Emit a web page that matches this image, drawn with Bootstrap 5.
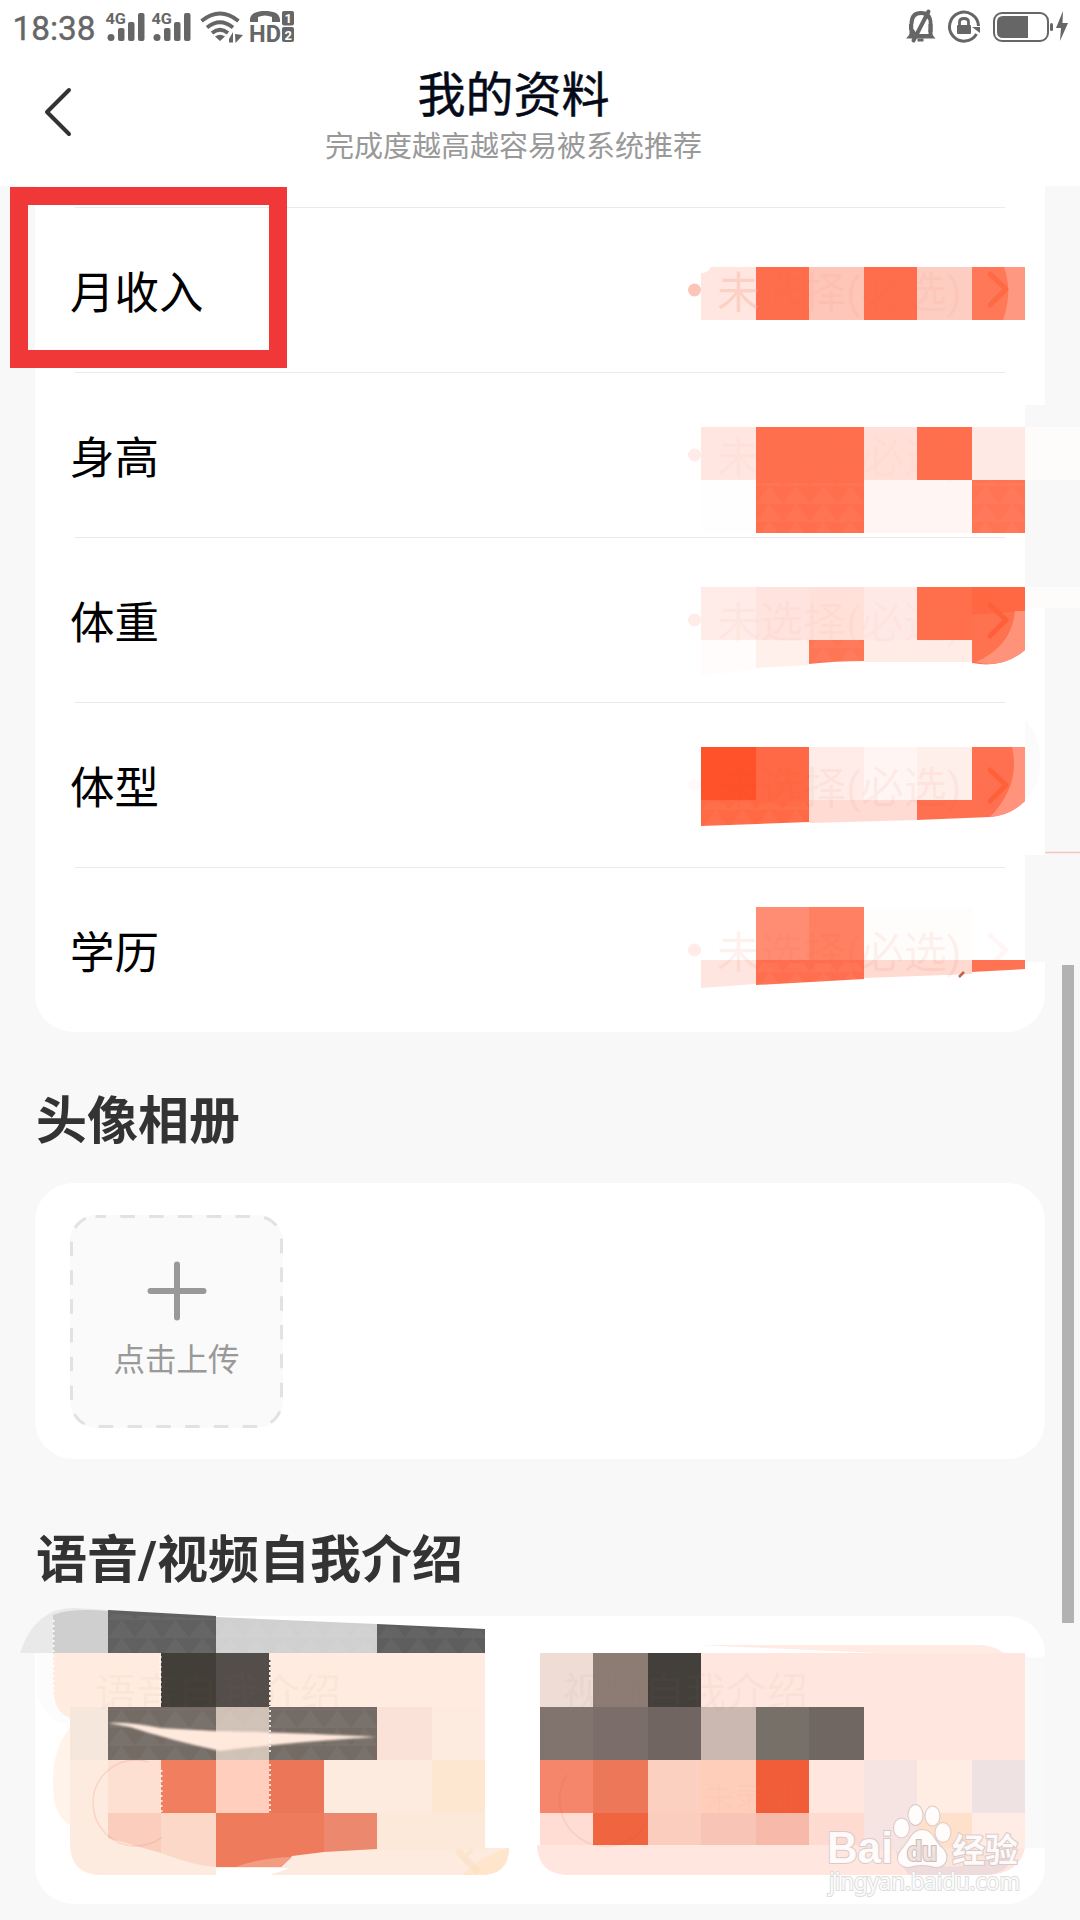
<!DOCTYPE html>
<html lang="zh-CN">
<head>
<meta charset="utf-8">
<meta name="viewport" content="width=device-width, initial-scale=1">
<title>我的资料</title>
<link href="https://cdn.jsdelivr.net/npm/bootstrap@5.3.0/dist/css/bootstrap.min.css" rel="stylesheet">
<style>
  body{font-family:Roboto,"Noto Sans CJK SC",sans-serif;background:#f8f8f8;color:#000}
  svg{display:block;overflow:visible}
  svg text{font-family:Roboto,"Noto Sans CJK SC",sans-serif}
  .screen{width:1080px;height:1920px}
  .topbar{height:186px}
  .status{height:56px}
  .navrow{height:130px;padding:0 125px 0 44px}
  .navtitle{font-size:48px;line-height:56px;font-weight:400;color:#050a18;padding-top:12px;-webkit-text-stroke:.5px #050a18}
  .navsub{font-size:29px;line-height:40px;color:#999;padding-top:3px}
  .backicon{padding-top:31px}
  .panel{margin:0 35px;background:#fff;border-radius:38px}
  .fields{height:846px;border-radius:0 0 38px 38px;padding:21px 0 0 36px}
  .field{height:165px;font-size:44.5px}
  .field>span{padding-top:9px;margin-left:-1px}
  .rule{position:relative}
  .rule::before{content:"";position:absolute;left:4px;right:40px;top:0;height:1px;background:#ebebeb}
  .bleed{margin-right:-35px}
  .heading{font-size:51px;line-height:50px;font-weight:700;color:#333;padding-left:36px}
  .h-a{height:151px;padding-bottom:36px}
  .h-b{height:157px;padding-bottom:30px}
  .album{height:276px;padding:32px 35px}
  .upload{width:213px;height:213px;background:#fafafa;border-radius:26px;color:#999;font-size:31.5px;line-height:40px;position:relative;padding-top:46px}
  .upload .dash{position:absolute;inset:0}
  .upload span{margin-top:20px}
  .media{height:288px}
  .scrollthumb{position:absolute;left:1062px;top:965px;width:12px;height:658px;background:#b2b2b2}
  .callout{position:absolute;left:10px;top:187px;width:277px;height:181px;border:18px solid #f13839}
  .wm{position:absolute;left:820px;top:1800px}
</style>
</head>
<body>
<svg width="0" height="0" class="position-absolute">
  <defs>
    <filter id="soft"><feGaussianBlur stdDeviation="1.2"/></filter>
    <pattern id="scales" width="27" height="18" patternUnits="userSpaceOnUse"><path d="M0 18 13.500 0 27 18Z" fill="#fff" opacity=".04"/></pattern>
    <path id="chev" d="M990 274 1006 289 990 305" fill="none" stroke-width="5" stroke-linecap="round" stroke-linejoin="round"/>
  </defs>
</svg>
<main class="screen position-relative overflow-hidden">
  <header class="topbar bg-white">
    <div class="status d-flex justify-content-between">
      <svg width="320" height="56" fill="#666">
        <text x="12.500" y="40" font-size="33.500" font-weight="400" stroke="#666" stroke-width=".4" textLength="83" lengthAdjust="spacingAndGlyphs">18:38</text>
        <g id="sig">
          <text x="105.500" y="23.500" font-size="15" font-weight="700" textLength="20.500" lengthAdjust="spacingAndGlyphs">4G</text>
          <circle cx="111" cy="37.500" r="3.500"/>
          <rect x="118" y="28" width="6.500" height="13" rx="2"/><rect x="128" y="22" width="6.500" height="19" rx="2"/><rect x="138" y="13" width="6.500" height="28" rx="2"/>
        </g>
        <use href="#sig" x="46"/>
        <g fill="none" stroke="#666" stroke-width="3.700">
          <path d="M201.500 21Q220 6 238.500 21"/><path d="M207 27.500Q220 17 233 27.500"/><path d="M212 33Q220 26.500 228 33"/>
        </g>
        <path d="M215 36.500Q220 33 225 36.500L220 41Z"/>
        <path d="M229 42.500V39L233 32V42.500ZM235 34 243 35 235.500 43Z"/>
        <path d="M250 22C249 13 257 11 265 11S281 13 280 22H272V17Q265 14 258 17V22Z"/>
        <text x="249" y="41.500" font-size="24.500" font-weight="700" textLength="32" lengthAdjust="spacingAndGlyphs">HD</text>
        <rect x="282" y="11" width="12" height="14.500" rx="2"/><rect x="282" y="27" width="12" height="15" rx="2"/>
        <g fill="#fff" font-size="13" font-weight="700"><text x="284.500" y="23">1</text><text x="284.500" y="39.500">2</text></g>
      </svg>
      <svg width="200" height="56" viewBox="880 0 200 56" fill="none" stroke="#666">
        <path d="M911.500 35V24Q911.500 13 921 13T930.500 24V35" stroke-width="4"/>
        <path d="M906 38.500Q911 34 911 29H931Q931 34 935.500 38.500Z" fill="#666" stroke="none"/>
        <path d="M913.500 29V24L922 15.500 928.500 20V34H917Z" fill="#fff" stroke="none"/>
        <path d="M911 24V30M930.500 24V32" stroke-width="4"/>
        <path d="M913.500 40.500 928.500 11.500" stroke-width="4" stroke-linecap="round"/><path d="M917.500 40H923.500" stroke-width="3"/>
        <path d="M976.500 34A14.500 14.500 0 1 1 978.500 26" stroke-width="3"/>
        <path d="M972 27H980V33Z" fill="#666" stroke="none"/>
        <rect x="957" y="25" width="14" height="9" rx="1" fill="#666" stroke="none"/><path d="M959.500 26V22Q959.500 18.500 964 18.500T968.500 22V26" stroke-width="2.800"/>
        <rect x="994" y="13" width="54" height="28" rx="8" stroke-width="2"/>
        <path d="M1003 16H1028V38H1003Q997 38 997 32V22Q997 16 1003 16Z" fill="#666" stroke="none"/>
        <rect x="1050" y="23" width="3" height="8" rx="1.500" fill="#666" stroke="none"/>
        <path d="M1063 11 1056 28H1061L1060 41 1068 23H1062.500Z" fill="#666" stroke="none"/>
      </svg>
    </div>
    <div class="navrow d-flex align-items-start">
      <div class="backicon"><svg width="28" height="50"><path d="M25 3 3 25 25 47" fill="none" stroke="#333" stroke-width="4" stroke-linecap="round" stroke-linejoin="round"/></svg></div>
      <div class="flex-grow-1 text-center"><div class="navtitle">我的资料</div><div class="navsub">完成度越高越容易被系统推荐</div></div>
    </div>
  </header>

  <section class="panel fields">
    <div class="field rule d-flex align-items-center justify-content-between"><span>月收入</span>
      <svg class="bleed flex-shrink-0" width="400" height="165" viewBox="680 207 400 165">
        <circle cx="694.500" cy="290" r="6.500" fill="#fdc5b8"/>
        <path d="M701 273Q708 273 711 267H756V320H701Z" fill="#ffe6e0"/>
        <path d="M756 267H809V320H756Z" fill="#ff6e4c"/><path d="M809 267H864V320H809Z" fill="#fec6b9"/>
        <path d="M864 267H917V320H864Z" fill="#ff6e4c"/><path d="M917 267H972V320H917Z" fill="#fdcdc1"/>
        <path d="M972 267H1025V320H972Z" fill="#ff7858"/><path d="M1004 267H1025V320H1003Q1013 292 1004 267Z" fill="#ff9880"/>
        <text x="717" y="308" font-size="43" fill="#fbb19f" opacity=".4">未</text><text x="760" y="308" font-size="43" fill="#f4653f" opacity=".06">选择(必选)</text>
        <use href="#chev" stroke="#ff6944"/>
      </svg>
    </div>
    <div class="field rule d-flex align-items-center justify-content-between"><span>身高</span>
      <svg class="bleed flex-shrink-0" width="400" height="165" viewBox="680 372 400 165">
        <path d="M1025 405H1045V537H1025Z" fill="#f8f8f8"/><path d="M1025 427H1080V480H1025Z" fill="#fdfcfa"/>
        <circle cx="694.500" cy="455" r="6.500" fill="#ffebe7"/>
        <path d="M701 427H756V480H701Z" fill="#ffe6e0"/><path d="M756 427H864V533H756Z" fill="#ff6f4d"/>
        <path d="M864 427H917V480H864Z" fill="#ffe0d9"/><path d="M917 427H972V480H917Z" fill="#ff6f4d"/><path d="M972 427H1025V480H972Z" fill="#ffe9e4"/>
        <path d="M701 480H756V533H701Z" fill="#fffefe"/><path d="M864 480H972V533H864Z" fill="#fff5f2"/><path d="M972 480H1025V533H972Z" fill="#ff7453"/>
        <path d="M756 483H864V533H756ZM972 483H1025V533H972Z" fill="url(#scales)"/>
        <text x="717" y="473" font-size="43" fill="#f77956" opacity=".04">未选择(必选)</text>
      </svg>
    </div>
    <div class="field rule d-flex align-items-center justify-content-between"><span>体重</span>
      <svg class="bleed flex-shrink-0" width="400" height="165" viewBox="680 537 400 165">
        <path d="M640 536H1007V539H640Z" fill="#fff"/>
        <path d="M1025 537H1045V587H1025Z" fill="#f8f8f8"/><path d="M1025 587H1080V608H1025Z" fill="#fdfcfa"/>
        <circle cx="694.500" cy="620" r="6.500" fill="#ffebe8"/>
        <path d="M701 587H756V640H701Z" fill="#ffece8"/><path d="M756 587H809V640H756Z" fill="#ffe3de"/><path d="M809 587H864V640H809Z" fill="#ffe1da"/><path d="M864 587H917V640H864Z" fill="#ffe9e6"/>
        <path d="M701 640H756V669L701 676Z" fill="#fffcfb"/><path d="M756 640H809V665L756 668Z" fill="#fff0ec"/><path d="M864 640H972V662H864Z" fill="#ffece6"/>
        <path d="M809 640H864V661Q835 661 809 664Z" fill="#ff7655"/><path d="M917 587H972V640H917Z" fill="#ff6f4c"/>
        <path d="M972 587H1025V650Q1003 669 972 663Z" fill="#ff7250"/><path d="M972 587H1025V611L972 615Z" fill="#ff6842"/>
        <path d="M1015 611H1025V650Q1003 669 976 662Q1012 646 1015 611Z" fill="#ff937a"/>
        <path d="M809 640H864V661H809Z" fill="url(#scales)"/>
        <text x="717" y="638" font-size="43" fill="#fb7c59" opacity=".05">未选择(必选)</text><use href="#chev" y="331" stroke="#ff603a"/>
      </svg>
    </div>
    <div class="field rule d-flex align-items-center justify-content-between"><span>体型</span>
      <svg class="bleed flex-shrink-0" width="400" height="165" viewBox="680 702 400 165">
        <path d="M1025 720Q1040 735 1040 762T1025 798Z" fill="#fbfbfb"/>
        <circle cx="694.500" cy="785" r="6.500" fill="#fffaf9"/>
        <path d="M701 747H756V800H701Z" fill="#ff522a"/><path d="M756 747H809V800H756Z" fill="#ff6945"/>
        <path d="M701 800H809V822L701 826Z" fill="#ff6944"/><path d="M701 802H809V822L701 826Z" fill="url(#scales)"/>
        <path d="M809 747H864V800H809Z" fill="#ffece8"/><path d="M864 747H917V800H864Z" fill="#fff5f2"/><path d="M917 747H972V800H917Z" fill="#ffefeb"/>
        <path d="M809 800H917V820L809 823Z" fill="#ffdbd4"/>
        <path d="M972 747H1025V801Q1008 816 990 817L917 820V800H972Z" fill="#ff7050"/>
        <path d="M1012 747H1025V801Q1012 815 990 817Q1021 785 1012 747Z" fill="#ff937b"/>
        <text x="717" y="803" font-size="43" fill="#ed4b22" opacity=".06">未选择(必选)</text><use href="#chev" y="496" stroke="#ff6039"/>
        <path d="M1045 852.500H1080" stroke="#f5c8be" stroke-width="1.500"/><path d="M1025 855H1045V867H1025Z" fill="#f8f8f8"/>
      </svg>
    </div>
    <div class="field rule d-flex align-items-center justify-content-between"><span>学历</span>
      <svg class="bleed flex-shrink-0" width="400" height="165" viewBox="680 867 400 165">
        <path d="M780 866H1007V869H780Z" fill="#fff" opacity=".8"/><path d="M1025 867H1045V962H1025Z" fill="#f8f8f8"/>
        <circle cx="694.500" cy="950" r="6.500" fill="#ffebe7"/>
        <path d="M756 907H809V960H756Z" fill="#ff8d74"/><path d="M809 907H864V960H809Z" fill="#ff8062"/><path d="M864 907H972V960H864Z" fill="#fffdfc"/>
        <path d="M701 960H756V984L701 988Z" fill="#ffe5df"/><path d="M756 960H864V979L756 985Z" fill="#ff6f4f"/><path d="M756 963H864V979L756 985Z" fill="url(#scales)"/>
        <path d="M864 960H972V974L864 978Z" fill="#ffdad1"/><path d="M972 960H1025V969L972 972Z" fill="#ff7352"/>
        <text x="717" y="968" font-size="43" fill="#ea6848" opacity=".09">未选择(必选)</text><use href="#chev" y="661" stroke="#ff795c" opacity=".06"/>
        <path d="M959 977 964 972" stroke="#be604c" stroke-width="2.500"/>
      </svg>
    </div>
  </section>

  <h2 class="heading h-a d-flex align-items-end m-0">头像相册</h2>
  <section class="panel album">
    <div class="upload d-flex flex-column align-items-center">
      <svg class="dash" width="213" height="213"><rect x="1.500" y="1.500" width="210" height="210" rx="24" fill="none" stroke="#e2e2e2" stroke-width="3" stroke-dasharray="14.500 14.300" stroke-dashoffset="4"/></svg>
      <svg width="60" height="60"><path d="M30 3.500V56.500M3.500 30H56.500" stroke="#999" stroke-width="6" stroke-linecap="round"/></svg>
      <span>点击上传</span>
    </div>
  </section>

  <h2 class="heading h-b d-flex align-items-end m-0">语音/视频自我介绍</h2>
  <section class="panel media d-flex">
    <svg width="490" height="288" viewBox="35 1616 490 288">
      <path d="M20 1653Q35 1607 75 1608Q110 1610 140 1613V1653Z" fill="#e9e9e9"/>
      <path d="M37 1653H72V1725Q48 1725 37 1695Z" fill="#fcfcfc"/>
      <path d="M70 1700H485V1848H509Q508 1875 481 1875H98Q70 1873 70 1843Z" fill="#feebdf"/>
      <path d="M70 1728Q53 1747 53 1782T70 1825Z" fill="#fff3ea"/>
      <path d="M53 1615Q70 1608 108 1611V1653H53Z" fill="#cfcfcf"/>
      <path d="M108 1610 216 1616V1653H108Z" fill="#606060"/><path d="M216 1617 377 1624V1653H216Z" fill="#d0d0d0"/><path d="M377 1624 485 1629V1653H377Z" fill="#5e5e5e"/>
      <path d="M108 1614 485 1631V1653H108Z" fill="url(#scales)"/>
      <path d="M53 1653H485V1707H70V1718Q53 1712 53 1685Z" fill="#ffebdf"/>
      <path d="M70 1707H108V1760H70Z" fill="#f5e7dc"/>
      <path d="M161 1653H216V1707H161Z" fill="#423e38"/><path d="M216 1653H269V1707H216Z" fill="#534e4a"/>
      <path d="M108 1707H377V1760H108Z" fill="#746b65"/><path d="M216 1707H269V1760H216Z" fill="#d0c1b6"/><path d="M377 1707H432V1760H377Z" fill="#fbe2d8"/>
      <path d="M108 1709H377V1760H108Z" fill="url(#scales)"/>
      <path d="M108 1723Q130 1722 161 1728L216 1731Q280 1732 377 1737Q290 1742 220 1751Q170 1740 130 1727Z" fill="#ffe9dd" filter="url(#soft)"/>
      <path d="M108 1760H161V1813H108Z" fill="#fde0d2"/><path d="M161 1760H216V1813H161Z" fill="#f07e5f"/><path d="M216 1760H269V1813H216Z" fill="#ffcebc"/><path d="M269 1760H324V1813H269Z" fill="#eb7758"/>
      <path d="M432 1760H485V1813H432Z" fill="#fee7d0"/><path d="M324 1813H485V1850H324Z" fill="#fce9da"/>
      <path d="M108 1813H161V1853L108 1838Z" fill="#facdbd"/><path d="M161 1813H216V1867Q195 1866 161 1853Z" fill="#fcd8c8"/>
      <path d="M216 1813H324V1852L292 1856 281 1867H216Z" fill="#ee7c5c"/><path d="M324 1813H377V1849L324 1852Z" fill="#eb886e"/>
      <path d="M236 1867Q258 1858 292 1857L281 1867Z" fill="#f39c82"/><path d="M216 1868H290L270 1875H216Z" fill="#fff"/>
      <circle cx="136" cy="1803" r="43" fill="none" stroke="#eb765c" stroke-width="1.500" opacity=".2" stroke-dasharray="175 96" stroke-dashoffset="-40"/>
      <path d="M53.500 1620V1720M160.500 1656V1704M161.500 1770V1812M270 1660V1755M270 1764V1812" stroke="#fff" stroke-width="2" stroke-dasharray="2 3" opacity=".8"/>
      <path d="M269.500 1660V1706" stroke="#534e4a" stroke-width="2" stroke-dasharray="2 3"/>
      <path d="M509 1848Q509 1875 481 1875H463Q476 1858 509 1848Z" fill="#fee5cc"/>
      <path d="M460 1853 476 1870" stroke="#fbdfc3" stroke-width="7" stroke-linecap="round" opacity=".6"/><path d="M456 1850Q465 1861 472 1849" stroke="#fce6cb" stroke-width="4" fill="none"/>
      <text x="95" y="1708" font-size="41" fill="#a07662" opacity=".04">语音自我介绍</text>
    </svg>
    <svg width="520" height="288" viewBox="525 1616 520 288">
      <path d="M1025 1654H1045V1848H1025Z" fill="#f9f9f9"/>
      <path d="M1045 1654Q1044 1660 1025 1656V1653H1045Z" fill="#fff"/>
      <path d="M700 1645H980Q996 1646 1005 1654H900Z" fill="#ffebe4"/>
      <path d="M540 1653H1025V1848Q1019 1875 985 1875H565Q538 1873 537 1845H540Z" fill="#ffe7df"/>
      <path d="M540 1653H593V1707H540Z" fill="#eedcd5"/><path d="M593 1653H648V1707H593Z" fill="#8c7c74"/><path d="M648 1653H701V1707H648Z" fill="#433f3b"/>
      <path d="M540 1707H593V1760H540Z" fill="#81746f"/><path d="M593 1707H648V1760H593Z" fill="#7b6e6a"/><path d="M648 1707H701V1760H648Z" fill="#706561"/><path d="M701 1707H756V1760H701Z" fill="#cbb8b0"/><path d="M756 1707H809V1760H756Z" fill="#777069"/><path d="M809 1707H864V1760H809Z" fill="#706662"/>
      <path d="M540 1760H593V1813H540Z" fill="#f5866b"/><path d="M593 1760H648V1813H593Z" fill="#ed7859"/><path d="M648 1760H701V1813H648Z" fill="#fbd0c0"/><path d="M701 1760H756V1813H701Z" fill="#ffceba"/><path d="M756 1760H809V1813H756Z" fill="#f15d39"/>
      <path d="M864 1760H917V1850H864Z" fill="#f5e4e2"/><path d="M917 1760H972V1813H917Z" fill="#ffece2"/><path d="M972 1760H1025V1813H972Z" fill="#efe2e2"/>
      <path d="M540 1813H593V1845H540Z" fill="#ffddd4"/><path d="M593 1813H648V1845H593Z" fill="#f06440"/><path d="M648 1813H701V1845H648Z" fill="#facdbf"/><path d="M701 1813H756V1845H701Z" fill="#f8c4b5"/><path d="M756 1813H809V1845H756Z" fill="#f7baaa"/><path d="M809 1813H864V1845H809Z" fill="#fddbd1"/><path d="M917 1813H972V1848H917Z" fill="#ffe0cb"/><path d="M972 1813H1025V1848H972Z" fill="#ffece4"/>
      <path d="M895 1850Q950 1882 1018 1850Q1008 1875 985 1875H909Q899 1863 895 1850Z" fill="#eedbdc"/><path d="M900 1848H1008Q950 1885 900 1848Z" fill="#fbe6dc"/>
      <path d="M567 1775A43 43 0 0 0 645 1825" fill="none" stroke="#d84c31" stroke-width="2" opacity=".1"/>
      <text x="562" y="1707" font-size="41" fill="#977b6f" opacity=".05">视频自我介绍</text><text x="704" y="1808" font-size="30" fill="#e87c58" opacity=".04">未录制</text>
    </svg>
  </section>

  <div class="scrollthumb"></div>
  <div class="callout"></div>
  <svg class="wm" width="210" height="110" viewBox="820 1800 210 110" fill="#fff" stroke="#dccac8" stroke-width="2" fill-opacity=".9">
    <g style="paint-order:stroke">
    <text x="827" y="1863" font-size="44" font-weight="700" textLength="66" lengthAdjust="spacingAndGlyphs" style="font-family:'Liberation Sans',sans-serif">Bai</text>
    <ellipse cx="901.500" cy="1828" rx="7.500" ry="9.500"/><ellipse cx="915.500" cy="1815" rx="7" ry="10"/><ellipse cx="932.500" cy="1816" rx="7" ry="9.500"/><ellipse cx="943" cy="1832.500" rx="7.500" ry="9.500"/>
    <path d="M922 1830C912 1830 909 1842 903 1848C894 1858 898 1867 909 1867Q922 1863 935 1867C947 1868 950 1855 942 1848C934 1841 933 1830 922 1830Z"/>
    <text x="907" y="1861" font-size="27" font-weight="700" fill="#f1e2e0" stroke="#cfbcb9" textLength="30" lengthAdjust="spacingAndGlyphs">du</text>
    <text x="952" y="1862" font-size="33" font-weight="700" textLength="66">经验</text>
    <text x="829" y="1890" font-size="23" stroke="#ddd" textLength="191" lengthAdjust="spacingAndGlyphs" style="font-family:'Noto Sans',sans-serif">jingyan.baidu.com</text>
    </g>
  </svg>
</main>
<script src="https://cdn.jsdelivr.net/npm/bootstrap@5.3.0/dist/js/bootstrap.bundle.min.js"></script>
</body>
</html>
